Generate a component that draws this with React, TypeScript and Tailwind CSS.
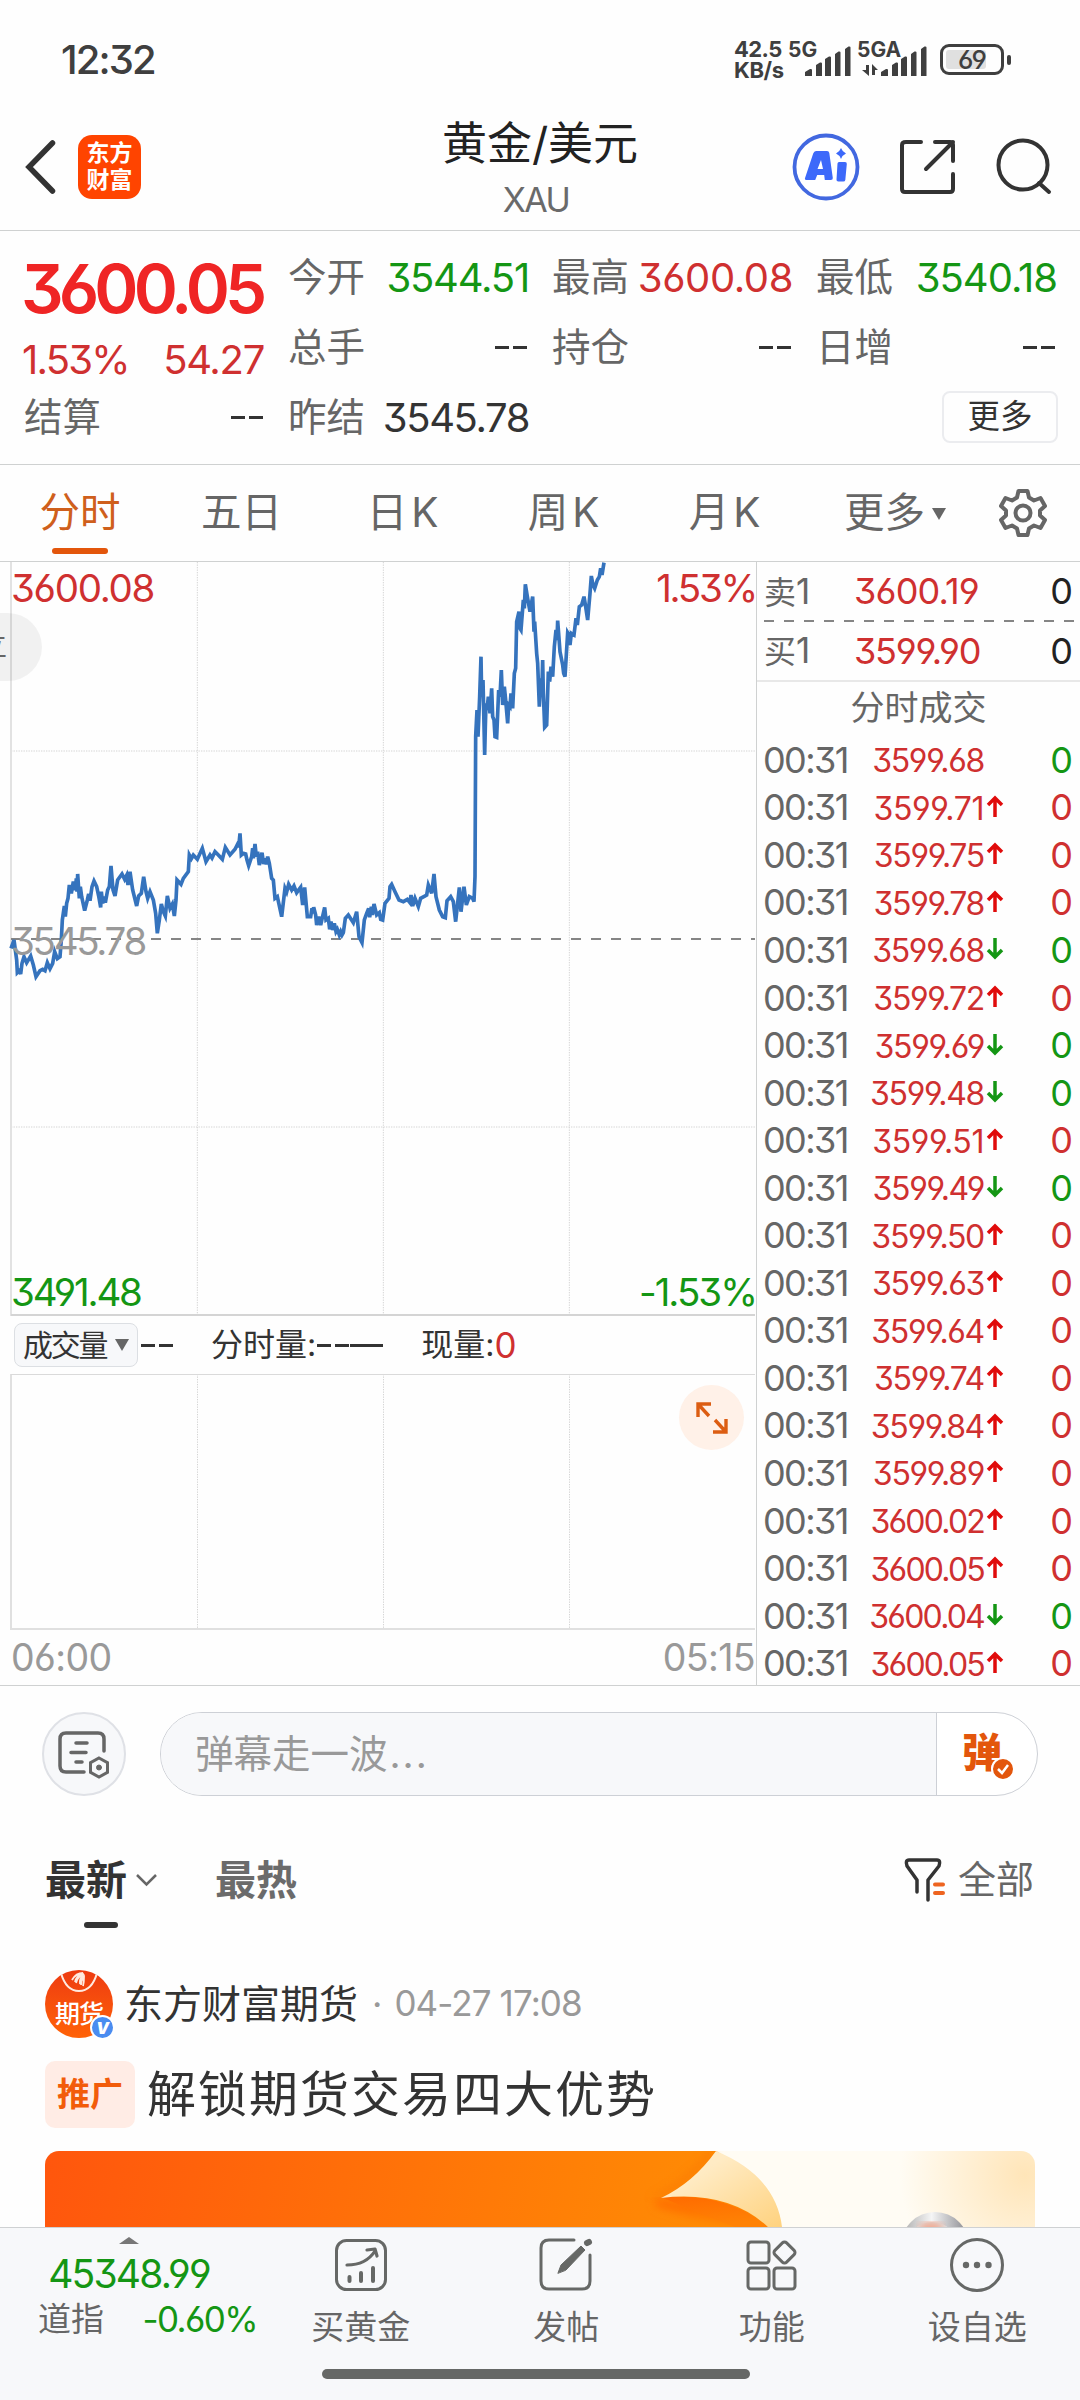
import React from "react";

const PRICE_LINE =
  "33,1195 42,1170 50,1230 52,1268 58,1262 62,1272 66,1240 72,1220 80,1238 86,1228 92,1218 100,1245 108,1280 120,1262 128,1258 135,1262 142,1238 150,1256 158,1240 164,1205 172,1226 180,1220 184,1170 187,1110 193,1068 196,1100 200,1060 204,1045 208,1005 214,1030 220,995 226,1020 229,985 231,1025 233,972 238,1045 241,1010 245,1040 254,1082 262,1050 266,1032 270,1052 276,1010 282,993 290,1010 296,1038 302,1072 304,1025 308,1060 312,1040 316,1058 323,1020 328,1010 333,948 339,1020 345,1038 353,990 366,972 374,988 380,976 384,1005 390,965 398,1020 410,1068 416,1038 424,1030 431,980 438,1025 443,1045 450,1025 460,1050 467,1090 472,1150 478,1110 484,1062 490,1085 496,1098 502,1038 510,1075 517,1062 523,1098 528,1050 531,990 543,1003 550,985 565,965 568,915 574,926 580,915 592,928 607,895 618,935 630,915 636,924 645,905 655,915 667,928 676,892 690,915 705,898 714,880 716,892 720,850 724,915 730,910 737,912 741,930 746,947 755,920 758,895 760,925 765,882 769,920 773,905 778,945 786,908 791,942 795,925 799,943 803,920 808,940 815,985 820,990 825,1045 832,1040 845,1100 855,1015 860,1026 866,1003 875,1020 882,1008 890,1028 902,1012 908,1065 914,1012 922,1100 932,1100 936,1075 938,1090 941,1072 947,1095 950,1125 956,1100 962,1125 974,1072 978,1110 985,1105 989,1138 993,1115 998,1140 1003,1120 1008,1145 1012,1138 1018,1155 1022,1145 1026,1155 1030,1148 1036,1105 1045,1095 1060,1118 1070,1085 1077,1160 1086,1178 1093,1110 1100,1090 1106,1075 1109,1102 1114,1070 1117,1095 1122,1062 1130,1095 1138,1088 1142,1108 1148,1110 1155,1060 1167,1045 1170,1010 1175,1003 1185,1025 1197,1050 1210,1055 1222,1048 1230,1058 1233,1035 1238,1068 1245,1045 1255,1070 1262,1045 1280,1035 1285,1005 1295,1030 1302,972 1308,1040 1318,1080 1328,1100 1336,1103 1341,1052 1352,1040 1360,1055 1367,1115 1374,1050 1378,1012 1383,1085 1392,1010 1399,1065 1408,1040 1418,1045 1422,1055 1425,980 1427,560 1431,480 1434,560 1439,440 1443,320 1445,440 1449,390 1454,615 1456,530 1458,460 1461,480 1465,440 1470,490 1475,415 1478,500 1482,510 1485,560 1490,562 1496,420 1500,440 1504,360 1508,465 1513,410 1517,450 1523,520 1526,465 1530,470 1533,430 1538,475 1543,370 1547,355 1550,215 1557,185 1560,235 1563,240 1570,150 1573,175 1576,103 1582,140 1590,185 1598,140 1602,245 1604,215 1610,310 1613,340 1618,470 1622,385 1625,440 1628,330 1630,430 1634,532 1640,525 1645,365 1649,395 1653,350 1658,380 1663,290 1668,240 1671,270 1673,212 1680,305 1688,345 1691,370 1695,380 1703,248 1707,255 1710,285 1714,250 1722,255 1728,205 1732,225 1738,170 1745,165 1752,140 1757,170 1763,210 1770,130 1774,78 1779,105 1784,115 1792,90 1798,80 1802,55 1806,75 1812,38";

const TRADES: [string, "up" | "down" | "flat", "r" | "g"][] = [
  ["3599.68", "flat", "g"],
  ["3599.71", "up", "r"],
  ["3599.75", "up", "r"],
  ["3599.78", "up", "r"],
  ["3599.68", "down", "g"],
  ["3599.72", "up", "r"],
  ["3599.69", "down", "g"],
  ["3599.48", "down", "g"],
  ["3599.51", "up", "r"],
  ["3599.49", "down", "g"],
  ["3599.50", "up", "r"],
  ["3599.63", "up", "r"],
  ["3599.64", "up", "r"],
  ["3599.74", "up", "r"],
  ["3599.84", "up", "r"],
  ["3599.89", "up", "r"],
  ["3600.02", "up", "r"],
  ["3600.05", "up", "r"],
  ["3600.04", "down", "g"],
  ["3600.05", "up", "r"],
];

function SignalBars() {
  return (
    <svg width="46" height="30" viewBox="0 0 46 30" fill="#3f3f3f">
      <path d="M0 30v-4l5-3q2-.5 2 1v6zM11 30V19l4-2.500q2-.5 2 1V30zM20 30V13l4-2.500q2-.5 2 1V30zM30 30V8l3.500-2.500q2-.5 2 1V30zM40 30V3l3.500-2.500q2-.5 2 1V30z" />
    </svg>
  );
}

function StatusBar() {
  return (
    <div className="relative flex h-[104px] items-center pt-4 pl-[61px] text-[#3f3f3f]">
      <span className="text-[40px] leading-none font-medium tracking-[-1.9px]">12:32</span>
      <div className="absolute top-[39px] left-[734px] flex flex-col text-[22px] leading-[21px] font-bold">
        <span className="tracking-[-0.6px]">42.5</span>
        <span className="tracking-[-0.4px]">KB/s</span>
      </div>
      <span className="absolute top-[39px] left-[788px] text-[21px] leading-[21px] font-bold">5G</span>
      <div className="absolute top-[46px] left-[805px]"><SignalBars /></div>
      <span className="absolute top-[39px] left-[857px] text-[21px] leading-[21px] font-bold">5GA</span>
      <svg className="absolute top-[64px] left-[862px]" width="18" height="12" viewBox="0 0 18 12" fill="#3f3f3f">
        <path d="M4 1h3v11L0 6h4zM10 0l6 6h-3v5h-3z" />
      </svg>
      <div className="absolute top-[46px] left-[881px]"><SignalBars /></div>
      <div className="absolute top-[44px] left-[940px] flex h-[31px] w-[64px] items-center rounded-[9px] border-[3px] border-[#3f3f3f] p-[3px]">
        <div className="h-full w-[40px] rounded-[3px] bg-[#e0e0e0]" />
        <span className="absolute left-[15px] text-[26px] leading-none font-medium tracking-[-1px]">69</span>
      </div>
      <div className="absolute top-[55px] left-[1007px] h-[10px] w-[4px] rounded-[2px] bg-[#3f3f3f]" />
    </div>
  );
}

function Header() {
  return (
    <div className="relative flex h-[127px] items-start justify-between border-b border-[#cfd1d1]">
      <div className="flex h-[126px] items-center pl-6">
        <svg width="34" height="56" viewBox="0 0 34 56" fill="none" stroke="#333" strokeWidth="5.500">
          <path d="M28.500 4 5 28 28.500 52" strokeLinecap="round" strokeLinejoin="miter" />
        </svg>
        <div className="ml-5 flex h-[64px] w-[63px] flex-col items-center justify-center rounded-[14px] bg-[#ff4400] text-[23px] leading-[27px] font-bold text-white">
          <span>东方</span>
          <span>财富</span>
        </div>
      </div>
      <div className="absolute top-[16px] left-1/2 flex -translate-x-1/2 flex-col items-center">
        <span className="text-[45px] leading-[48px] text-[#222]">黄金/美元</span>
        <span className="mt-[14px] -ml-[8px] text-[34px] leading-[36px] tracking-[-1.6px] text-[#6a6a6a]">XAU</span>
      </div>
      <div className="flex h-[126px] items-center">
        <svg width="68" height="70" viewBox="0 0 68 70">
          <circle cx="34" cy="35" r="31.500" fill="#fff" stroke="#4268e0" strokeWidth="3.800" />
          <path d="M24 19h11q2 0 2.300 2l3.500 25q.2 2-2 2h-6l-.6-5h-7l-2 5h-9q-2-.2-1-2.500l8-24Q22 19 24 19ZM29 28l-3.500 9h5.500z" fill="#3d69fa" fillRule="evenodd" />
          <path d="M47 30h6q2 0 1.800 2l-1.500 16q-.2 1.500-2 1.500h-5q-2 0-1.800-2l1-16q.2-1.500 1.500-1.500Z" fill="#3d69fa" />
          <path d="M49 16q1.500 4 5 5.500-3.500 1.500-5 5.500-1.500-4-5-5.500 3.500-1.500 5-5.500Z" fill="#3d69fa" />
        </svg>
        <svg className="ml-[40px]" width="56" height="56" viewBox="0 0 56 56" fill="none" stroke="#333" strokeWidth="4" strokeLinecap="round">
          <path d="M21 3H6Q2 3 2 6v44q0 3 3 3h45q3 0 3-3V35M35 3h15q3 0 3 3v16M53 3 26 30" />
        </svg>
        <svg className="mr-[25px] ml-[39px]" width="60" height="60" viewBox="0 0 60 60" fill="none" stroke="#333" strokeWidth="4" strokeLinecap="round">
          <circle cx="28" cy="28" r="24.500" />
          <path d="m44 46 10 9" />
        </svg>
      </div>
    </div>
  );
}

function Field({ label, value, color }: { label: string; value: string; color: string }) {
  return (
    <div className="flex h-[70px] items-center justify-between whitespace-nowrap">
      <span className="text-[38.5px] leading-none text-[#666]">{label}</span>
      {value === "--" ? <Dashes /> : <span className={"-mr-[1px] pt-[2px] text-[40px] leading-none " + color}>{value}</span>}
    </div>
  );
}

function Dashes() {
  return (
    <span className="-ml-[1px] flex gap-1 pr-[1px]">
      <span className="h-[3px] w-[14px] bg-[#333]" />
      <span className="h-[3px] w-[14px] bg-[#333]" />
    </span>
  );
}

function Quote() {
  return (
    <div className="grid h-[234px] grid-cols-4 gap-x-6 border-b border-[#cfd1d1] px-6 pt-[11px]">
      <div className="flex flex-col">
        <div className="-ml-[3px] flex h-[92px] items-center text-[67px] leading-none font-semibold tracking-[-4.9px] text-[#ef2525]">3600.05</div>
        <div className="-ml-[2px] flex h-[48px] items-center justify-between pt-[3px] text-[40px] leading-none tracking-[-1.8px] text-[#cf3030]">
          <span>1.53%</span>
          <span className="tracking-[-1.3px]">54.27</span>
        </div>
        <Field label="结算" value="--" color="" />
      </div>
      <div>
        <Field label="今开" value="3544.51" color="tracking-[-1.2px] text-[#149614]" />
        <Field label="总手" value="--" color="" />
        <Field label="昨结" value="3545.78" color="tracking-[-1.4px] text-[#333]" />
      </div>
      <div>
        <Field label="最高" value="3600.08" color="tracking-[-0.4px] text-[#cf3030]" />
        <Field label="持仓" value="--" color="" />
      </div>
      <div>
        <Field label="最低" value="3540.18" color="tracking-[-1px] text-[#149614]" />
        <Field label="日增" value="--" color="" />
        <div className="mt-[9px] -mr-[2px] ml-auto flex h-[52px] w-[116px] items-center justify-center rounded-lg border-2 border-[#ebecef] text-[32.5px] leading-none text-[#333]">更多</div>
      </div>
    </div>
  );
}

function PeriodTabs() {
  return (
    <div className="flex h-[97px] border-b border-[#cfd1d1] text-[40.5px] leading-none text-[#666]">
      <div className="relative flex w-[161px] items-center justify-center pt-[1px] pr-[1px] text-[#cf5f1c]">
        分时
        <div className="absolute bottom-[7px] left-[52px] h-[6px] w-[56px] rounded-full bg-[#e3560c]" />
      </div>
      <div className="flex w-[161px] items-center justify-center pt-[1px]">五日</div>
      <div className="flex w-[161px] items-center justify-center pt-[1px]">日<span className="ml-1">K</span></div>
      <div className="flex w-[161px] items-center justify-center pt-[1px]">周<span className="ml-1">K</span></div>
      <div className="flex w-[161px] items-center justify-center pt-[1px]">月<span className="ml-1">K</span></div>
      <div className="flex w-[182px] items-center justify-center pt-[1px] pr-[2px]">
        更多
        <svg className="ml-[7px]" width="14" height="12" viewBox="0 0 14 12"><path d="M0 0h14L7 12Z" fill="#666" /></svg>
      </div>
      <div className="flex items-center pl-[12px]">
        <svg width="48" height="50" viewBox="-24 -25 48 50" fill="none" stroke="#666" strokeWidth="4" strokeLinejoin="round">
          <path d="M-4.500-22h9l1.500 6.500 5 3 6.500-2.500 4.500 8-5 4.500v5l5 4.500-4.500 8-6.500-2.500-5 3-1.500 6.500h-9l-1.500-6.500-5-3-6.500 2.500-4.500-8 5-4.500v-5l-5-4.500 4.500-8 6.500 2.500 5-3Z" />
          <circle r="7.500" />
        </svg>
      </div>
    </div>
  );
}

function PriceChart() {
  return (
    <div className="relative h-[754px]">
      <svg className="block" width="756" height="754" viewBox="0 36 2268 2262">
        <g stroke="#d4d4d4" strokeWidth="4" strokeDasharray="4 3.500" fill="none">
          <path d="M592 36V2295M1150 36V2295M1708 36V2295M33 603H2265M33 1731H2265" strokeWidth="3" />
        </g>
        <path d="M33 36V2298" stroke="#e2e2e2" strokeWidth="6" />
        <path d="M33 2295H2265" stroke="#d4d4d4" strokeWidth="6" />
        <path d="M33 1167H2265" stroke="#858585" strokeWidth="6" strokeDasharray="30 30" />
        <polyline points={PRICE_LINE} fill="none" stroke="#3573bd" strokeWidth="11" />
      </svg>
      <span className="absolute top-[7px] left-[11px] text-[38.5px] leading-none tracking-[-1.3px] text-[#cf3030]">3600.08</span>
      <span className="absolute top-[7px] right-0 text-[38.5px] leading-none tracking-[-2.3px] text-[#cf3030]">1.53%</span>
      <span className="absolute top-[360px] left-[11px] text-[38.5px] leading-none tracking-[-2.3px] text-[#999]">3545.78</span>
      <span className="absolute top-[711px] left-[11px] text-[38.5px] leading-none tracking-[-2.2px] text-[#149614]">3491.48</span>
      <span className="absolute top-[711px] right-0 text-[38.5px] leading-none tracking-[-2px] text-[#149614]">-1.53%</span>
      <div className="absolute top-[51px] left-0 h-[68px] w-[42px] overflow-hidden rounded-r-full bg-black/5">
        <span className="absolute top-[19px] -left-[21px] text-[28px] leading-none text-[#666]">立</span>
      </div>
    </div>
  );
}

function VolumeChart() {
  return (
    <>
      <div className="flex h-[58px] items-center pl-[14px] text-[32px] leading-none text-[#333]">
        <div className="flex h-[44px] w-[124px] items-center rounded-lg border border-[#dcdfe3] bg-[#f7f8fa] pl-[8px]">
          <span className="text-[30px] tracking-[-2.2px]">成交量</span>
          <svg className="ml-[9px]" width="14" height="12" viewBox="0 0 14 12"><path d="M0 0h14L7 12Z" fill="#666" /></svg>
        </div>
        <span className="ml-[4px]"><Dashes /></span>
        <span className="ml-[37px]">分时量:</span>
        <span className="ml-[2px] flex"><Dashes /><span className="h-[3px] w-[33px] bg-[#333]" /></span>
        <span className="ml-[38px]">现量:</span>
        <span className="text-[35px] text-[#cf3030]">0</span>
      </div>
      <div className="relative h-[256px]">
        <svg className="block" width="756" height="256" viewBox="0 0 756 256" fill="none">
          <path d="M197.500 0v256M383.500 0v256M569.500 0v256" stroke="#d4d4d4" strokeDasharray="1.300 1.200" />
          <path d="M11 0V256M11 255H755" stroke="#e0e0e0" strokeWidth="2" />
          <path d="M11 .5H755" stroke="#dadada" />
        </svg>
        <div className="absolute top-[11px] left-[679px] flex h-[65px] w-[65px] items-center justify-center rounded-full bg-[#fff1e8]">
          <svg width="34" height="34" viewBox="0 0 34 34" fill="none" stroke="#dc5d12" strokeWidth="3.400">
            <path d="M3 16V3h13M3 3l11 12M31 18v13H18M31 31 20 19" />
          </svg>
        </div>
      </div>
      <div className="flex h-[55px] items-center justify-between pr-[1px] pl-[11px] text-[37.5px] leading-none tracking-[-0.6px] text-[#999]">
        <span>06:00</span>
        <span>05:15</span>
      </div>
    </>
  );
}

function BookRow({ label, price }: { label: string; price: string }) {
  return (
    <div className="flex h-[58.5px] items-center pr-[9px] pl-[7px] leading-none">
      <span className="w-[90px] text-[35px] tracking-[-2px] text-[#666]">
        <span className="text-[32px] tracking-normal">{label}</span>1
      </span>
      <span className={"text-[36px] text-[#cf3030] " + (price.startsWith("3600") ? "tracking-[-0.8px]" : "tracking-[-1.2px]")}>{price}</span>
      <span className="ml-auto text-[36px] tracking-[-2px] text-[#222]">0</span>
    </div>
  );
}

function tickTracking(price: string) {
  if (price.startsWith("3600")) return "tracking-[-1.8px]";
  if (price.endsWith("1")) return "tracking-[-0.4px]";
  return "tracking-[-1.3px]";
}

function OrderPanel() {
  return (
    <div className="flex-1 border-l border-[#cfd1d1]">
      <BookRow label="卖" price="3600.19" />
      <svg className="-mt-px block" width="323" height="2"><path d="M7 1H318" stroke="#858585" strokeWidth="2" strokeDasharray="10 10" /></svg>
      <BookRow label="买" price="3599.90" />
      <div className="flex h-[56px] items-center justify-center border-t-2 border-[#e8e8e8] pb-[3px] text-[34px] leading-none text-[#666]">分时成交</div>
      {TRADES.map(([price, dir, tone], i) => (
        <div key={i} className="flex h-[47.55px] items-center pr-[9px] pl-[6px] leading-none">
          <span className="text-[36px] tracking-[-1.6px] text-[#666]">00:31</span>
          <span className={"ml-auto pt-[3px] text-[32px] text-[#cf3030] " + tickTracking(price)}>{price}</span>
          <svg className="ml-[2px] -mt-[2px]" width="18" height="23" viewBox="0 0 18 23" fill="none" strokeWidth="3.500">
            {dir === "up" && <path d="M9 22V3M2 10l7-7 7 7" stroke="#e00b0b" />}
            {dir === "down" && <path d="M9 1v19M2 13l7 7 7-7" stroke="#149614" />}
          </svg>
          <span className={"flex w-[67px] justify-end text-[36px] tracking-[-2px] " + (tone === "r" ? "text-[#cf3030]" : "text-[#149614]")}>0</span>
        </div>
      ))}
    </div>
  );
}

function CommentBar() {
  return (
    <div className="flex h-[136px] items-center pr-[42px] pl-[42px]">
      <div className="flex h-[84px] w-[84px] items-center justify-center rounded-full border-2 border-[#dfe1e6] bg-[#f7f8fa]">
        <svg className="mt-px" width="52" height="48" viewBox="0 0 52 48" fill="none" stroke="#666" strokeWidth="3.500" strokeLinecap="round">
          <path d="M46 20V8q0-6-6-6H8Q2 2 2 8v27q0 6 6 6h18" />
          <path d="M18 12h11M13 21.500h15M18 31h6" />
          <path d="m41 27 8.500 4.700v9.600L41 46l-8.500-4.700v-9.600Z" strokeWidth="3" />
          <circle cx="41" cy="36.500" r="2.500" fill="#666" strokeWidth="1" />
        </svg>
      </div>
      <div className="ml-[34px] flex h-[84px] flex-1 overflow-hidden rounded-full border border-[#cdd0d6] bg-white">
        <div className="flex flex-1 items-center border-r border-[#cdd0d6] bg-[#f7f8fa] pl-[34px] text-[38.5px] leading-none text-[#999]">
          弹幕走一波<span className="ml-[2px] tracking-[2px]">...</span>
        </div>
        <div className="relative w-[100px]">
          <span className="absolute top-[20px] left-[25px] text-[40px] leading-none font-black text-[#e3560c]">弹</span>
          <svg className="absolute top-[44px] left-[54px]" width="24" height="24" viewBox="0 0 24 24">
            <circle cx="12" cy="12" r="11" fill="#e3560c" stroke="#fff" strokeWidth="2" />
            <path d="m7 12 4 4 6-8" stroke="#fff" strokeWidth="2.500" fill="none" />
          </svg>
        </div>
      </div>
    </div>
  );
}

function FeedTabs() {
  return (
    <div className="relative flex h-[116px] items-center pr-[46px] pl-[45px] text-[41px] leading-none">
      <span className="font-bold text-[#333]">最新</span>
      <svg className="ml-[8px]" width="23" height="14" viewBox="0 0 23 14" fill="none" stroke="#666" strokeWidth="2.500"><path d="m2 2 9.500 9.500L21 2" /></svg>
      <span className="ml-[57px] font-bold text-[#6b6b6b]">最热</span>
      <svg className="ml-auto" width="42" height="44" viewBox="0 0 42 44" fill="none" stroke="#333" strokeWidth="3.500" strokeLinecap="round" strokeLinejoin="round">
        <path d="M13 34V22L3 8Q1 2 5 2h28q4 0 2 6L24 22v20" />
        <path d="M31 26.500h8M31 35h8" stroke="#ee6420" strokeWidth="4" />
      </svg>
      <span className="-mt-[2px] ml-[12px] text-[38px] text-[#666]">全部</span>
      <div className="absolute bottom-[10px] left-[84px] h-[6px] w-[34px] rounded-full bg-[#333]" />
    </div>
  );
}

function Post() {
  return (
    <div className="flex flex-col px-[45px]">
      <div className="mt-[32px] flex h-[68px] items-center leading-none">
        <div className="relative h-[68px] w-[68px] shrink-0 overflow-visible">
          <div className="relative h-[68px] w-[68px] overflow-hidden rounded-full bg-gradient-to-b from-[#ee3a10] to-[#ff6207]">
            <svg className="absolute top-0 left-[14px]" width="40" height="24" viewBox="0 0 40 24" fill="none" stroke="#ffe9df" strokeWidth="2">
              <path d="M2 3q5 18 18 18T38 3" />
              <path d="M13 10Q17 3 24 3q-7 3-8 9M17 13q1-6 8-9-5 5-4 10M22 15q0-5 3-8 0 6-1 9" strokeWidth="1.800" />
            </svg>
            <span className="absolute top-[32px] left-[10px] text-[25px] leading-none font-medium tracking-[-1px] text-white">期货</span>
          </div>
          <div className="absolute top-[45px] left-[45px] flex h-[25px] w-[25px] items-center justify-center rounded-full border-2 border-white bg-[#4a8cf0] text-[16px] leading-none font-black text-white italic">V</div>
        </div>
        <span className="-mt-[1px] ml-[11px] text-[39px] text-[#333]">东方财富期货</span>
        <span className="ml-[14px] text-[36px] text-[#999]">·</span>
        <span className="-mt-[1px] ml-[12px] text-[35px] tracking-[-0.9px] text-[#999]">04-27 17:08</span>
      </div>
      <div className="mt-[23px] flex h-[67px] items-center leading-none">
        <div className="flex h-[67px] w-[90px] items-center justify-center rounded-[10px] bg-[#ffece5] text-[33px] font-bold text-[#f25c0a]">推广</div>
        <span className="ml-[12px] text-[49px] tracking-[2px] text-[#333]">解锁期货交易四大优势</span>
      </div>
      <svg className="mt-[23px] block rounded-t-[14px]" width="990" height="76" viewBox="45 2151 990 76">
        <defs>
          <linearGradient id="fire" gradientUnits="userSpaceOnUse" x1="45" y1="2151" x2="700" y2="2290"><stop stopColor="#ff560d" /><stop offset="1" stopColor="#ff8c04" /></linearGradient>
          <linearGradient id="peel" x1="0" y1="0" x2="1" y2="1"><stop offset=".3" stopColor="#ffebc4" /><stop offset="1" stopColor="#ffd27e" /></linearGradient>
          <radialGradient id="glow" gradientUnits="userSpaceOnUse" cx="1025" cy="2175" r="125"><stop stopColor="#ffe5b8" /><stop offset="1" stopColor="#fffcf4" /></radialGradient>
          <linearGradient id="under" x1="0" y1="0" x2=".3" y2="1"><stop stopColor="#ff6a00" /><stop offset="1" stopColor="#ff8204" /></linearGradient>
          <linearGradient id="steel"><stop stopColor="#aaa" /><stop offset=".45" stopColor="#f5f5f5" /><stop offset="1" stopColor="#85858b" /></linearGradient>
          <filter id="soft"><feGaussianBlur stdDeviation="4" /></filter>
        </defs>
        <path d="M45 2151H1035V2227H45Z" fill="url(#glow)" />
        <path d="M45 2151H716Q760 2175 768 2227H45Z" fill="url(#fire)" />
        <path d="M716 2151Q692 2183 661 2197L650 2198Q690 2178 708 2151Z" fill="#f87000" opacity=".5" filter="url(#soft)" />
        <path d="M655 2200Q728 2198 768 2227Q700 2224 655 2206Z" fill="url(#under)" filter="url(#soft)" />
        <path d="M661 2197Q728 2192 768 2227H735Q700 2214 661 2197Z" fill="url(#under)" />
        <path d="M716 2151Q776 2176 782 2227H768Q728 2190 661 2198Q693 2183 716 2151Z" fill="url(#peel)" />
        <circle cx="935" cy="2246" r="34" fill="url(#steel)" />
        <circle cx="932" cy="2248" r="26" fill="#dedcdc" />
        <ellipse cx="931" cy="2229" rx="12" ry="6" fill="#f5a184" filter="url(#soft)" />
      </svg>
    </div>
  );
}

function NavItem({ label, children }: { label: string; children: React.ReactNode }) {
  return (
    <div className="flex w-[205.500px] flex-col items-center text-[33px] leading-none text-[#666]">
      <svg className="mt-[9px]" width="56" height="56" viewBox="-28 -28 56 56" fill="none" stroke="#666866" strokeWidth="3" strokeLinecap="round" strokeLinejoin="round">{children}</svg>
      <span className="mt-[18px]">{label}</span>
    </div>
  );
}

function BottomBar() {
  return (
    <div className="relative flex h-[173px] border-t border-[#cfd1d3] bg-[#f7f8fa]">
      <div className="flex w-[258px] flex-col items-center pt-[9px]">
        <svg width="20" height="7" viewBox="0 0 20 7"><path d="M0 7 10 0 20 7Z" fill="#777" /></svg>
        <span className="mt-[10px] text-[39px] leading-[40px] tracking-[-1.8px] text-[#149614]">45348.99</span>
        <div className="mt-[7px] ml-[37px] flex h-[36px] w-[219px] items-center justify-between text-[33px] leading-none">
          <span className="text-[#666]">道指</span>
          <span className="text-[35px] tracking-[-1.6px] text-[#149614]">-0.60%</span>
        </div>
      </div>
      <NavItem label="买黄金">
        <rect x="-24.500" y="-24.500" width="49" height="49" rx="10" />
        <path d="M-14 0Q5 0 14-14M6-15l8-1 2 7" strokeWidth="3.200" />
        <path d="M-11.500 12v4M0 8v8M12 3v13" strokeWidth="4" />
      </NavItem>
      <NavItem label="发帖">
        <path d="M8-25h-25q-8 0-8 8v33q0 8 8 8h33q8 0 8-8V-10" />
        <path d="m-8 8 3-8 20-19 4 4-19 20Z" fill="#666866" strokeWidth="1" />
        <path d="m21-22 2-1" strokeWidth="6" />
      </NavItem>
      <NavItem label="功能">
        <rect x="-24" y="-23" width="21" height="21" rx="3" />
        <rect x="-24" y="3" width="21" height="21" rx="3" />
        <rect x="2" y="3" width="21" height="21" rx="3" />
        <rect x="-8.300" y="-8.300" width="16.600" height="16.600" rx="3" transform="translate(12.500 -12.500) rotate(45)" />
      </NavItem>
      <NavItem label="设自选">
        <circle r="25.500" />
        <g fill="#666866" stroke="none"><circle cx="-11" r="3.200" /><circle r="3.200" /><circle cx="11.500" r="3.200" /></g>
      </NavItem>
      <div className="absolute bottom-[21px] left-[322px] h-[10px] w-[428px] rounded-full bg-[#666866]" />
    </div>
  );
}

export default function App() {
  return (
    <div className="flex h-[2400px] w-[1080px] flex-col overflow-hidden bg-[#fefefe] font-['Inter','Noto_Sans_CJK_SC',sans-serif] [font-feature-settings:'cv09','cv03','cv04']">
      <StatusBar />
      <Header />
      <Quote />
      <PeriodTabs />
      <div className="flex h-[1124px] shrink-0 border-b border-[#cfd1d1]">
        <div className="w-[756px]">
          <PriceChart />
          <VolumeChart />
        </div>
        <OrderPanel />
      </div>
      <CommentBar />
      <FeedTabs />
      <Post />
      <div className="shrink-0"><BottomBar /></div>
    </div>
  );
}
